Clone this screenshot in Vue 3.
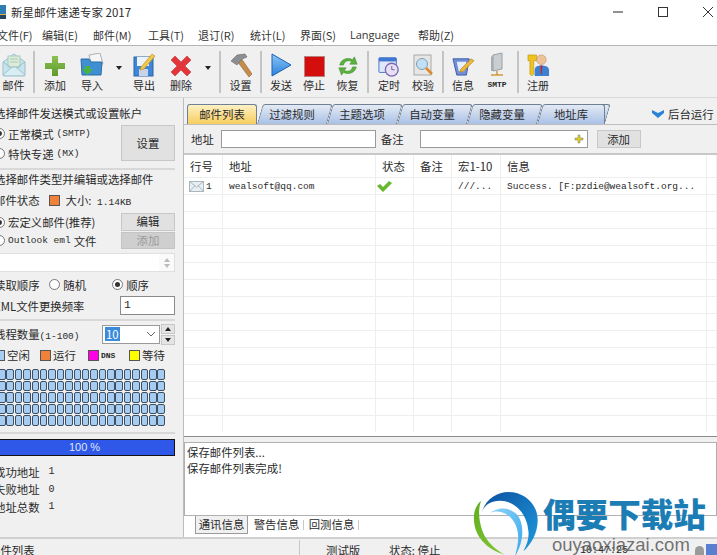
<script setup>
const menus = [
  { label: '文件(F)', width: 45 },
  { label: '编辑(E)', width: 51 },
  { label: '邮件(M)', width: 55 },
  { label: '工具(T)', width: 50 },
  { label: '退订(R)', width: 52 },
  { label: '统计(L)', width: 50 },
  { label: '界面(S)', width: 50 },
  { label: 'Language', width: 68 },
  { label: '帮助(Z)', width: 50 },
]
const tabs = ['邮件列表', '过滤规则', '主题选项', '自动变量', '隐藏变量', '地址库']
const columns = ['行号', '地址', '状态', '备注', '宏1-10', '信息', '']
const emptyRows = 14
const cells = 100
</script>

<template>
  <div class="window">
    <div class="titlebar">
      <svg class="app-icon" width="16" height="16" viewBox="0 0 16 16">
        <rect x="1" y="1" width="14" height="14" fill="#e3b341" />
        <rect x="6" y="1" width="9" height="9" fill="#2f7db5" />
        <rect x="1" y="11" width="14" height="4" fill="#26445f" />
      </svg>
      <span class="title">新星邮件速递专家 2017</span>
      <div class="win-controls">
        <svg width="12" height="12" viewBox="0 0 12 12"><path d="M1 6h10" stroke="#222" /></svg>
        <svg width="12" height="12" viewBox="0 0 12 12"><rect x="1.500" y="1.500" width="9" height="9" fill="none" stroke="#333" /></svg>
        <svg width="12" height="12" viewBox="0 0 12 12"><path d="M1 1l10 10M11 1L1 11" stroke="#333" /></svg>
      </div>
    </div>

    <div class="menubar">
      <span
        v-for="m in menus"
        :key="m.label"
        class="menu"
        :style="{ width: m.width + 'px' }"
      >{{ m.label }}</span>
    </div>

    <div class="toolbar">
      <div class="tool" style="width: 39px">
        <svg width="24" height="25" viewBox="0 0 24 25">
          <path d="M1 10l11-8 11 8v13a1 1 0 0 1-1 1H2a1 1 0 0 1-1-1z" fill="#c8e4ee" stroke="#9dbfca" />
          <rect x="6" y="4" width="12" height="11" fill="#dcecd8" stroke="#a8cbc0" />
          <path d="M8 7h8M8 10h8" stroke="#a9c9b8" />
          <path d="M1 23l9-8h4l9 8M1 10l9 6M23 10l-9 6" fill="#d8eef5" stroke="#9dbfca" />
        </svg>
        <span>邮件</span>
      </div>
      <i class="sep"></i>
      <div class="tool" style="width: 40px">
        <svg width="22" height="22" viewBox="0 0 22 22">
          <defs>
            <linearGradient id="plusFill" x1="0" y1="0" x2="0" y2="1">
              <stop offset="0" stop-color="#8cc152" />
              <stop offset="1" stop-color="#5f9a2c" />
            </linearGradient>
          </defs>
          <path d="M8 1h6v7h7v6h-7v7H8v-7H1V8h7z" fill="url(#plusFill)" />
        </svg>
        <span>添加</span>
      </div>
      <div class="tool" style="width: 34px">
        <svg width="24" height="24" viewBox="0 0 24 24">
          <path d="M9 2l11-2 3 11-11 2z" fill="#f4f6f8" stroke="#a9afb5" />
          <path d="M1 6h8l2 3h11l-1 13H2z" fill="#3f8fd2" stroke="#2a6da8" />
          <path d="M5 13h5v3h3l-5.500 6L2 16h3z" fill="#49b33f" />
        </svg>
        <span>导入</span>
      </div>
      <div class="drop" style="width: 20px"><i></i></div>
      <div class="tool" style="width: 30px">
        <svg width="23" height="24" viewBox="0 0 23 24">
          <rect x="1" y="4" width="19" height="19" fill="#3f86d8" stroke="#2a62a6" />
          <rect x="4" y="4" width="12" height="9" fill="#eef3fa" />
          <rect x="6" y="16" width="9" height="7" fill="#c9d5e6" />
          <path d="M8 14L19 1l3 2-11 13-4 1z" fill="#f2c84b" stroke="#b88a1e" stroke-width=".6" />
        </svg>
        <span>导出</span>
      </div>
      <div class="tool" style="width: 44px">
        <svg width="22" height="22" viewBox="0 0 22 22">
          <path d="M1 5l4-4 6 6 6-6 4 4-6 6 6 6-4 4-6-6-6 6-4-4 6-6z" fill="#e2363a" stroke="#bb3a3e" stroke-width=".6" stroke-linejoin="round" />
        </svg>
        <span>删除</span>
      </div>
      <div class="drop drop--end" style="width: 10px"><i></i></div>
      <i class="sep"></i>
      <div class="tool" style="width: 39px">
        <svg width="22" height="24" viewBox="0 0 22 24">
          <path d="M7 8l4-3 11 16-3 3z" fill="#c58d4d" stroke="#8f6431" stroke-width=".6" />
          <path d="M1 8l6-6 8-1 2 3-5 2-5 6z" fill="#8b8f94" stroke="#666" stroke-width=".6" />
        </svg>
        <span>设置</span>
      </div>
      <i class="sep"></i>
      <div class="tool" style="width: 38px">
        <svg width="21" height="24" viewBox="0 0 21 24">
          <defs>
            <linearGradient id="sendFill" x1="0" y1="0" x2="0" y2="1">
              <stop offset="0" stop-color="#8cc4f4" />
              <stop offset="1" stop-color="#2a82de" />
            </linearGradient>
          </defs>
          <path d="M1 1l19 11L1 23z" fill="url(#sendFill)" stroke="#1d62b0" />
        </svg>
        <span>发送</span>
      </div>
      <div class="tool" style="width: 28px">
        <svg width="21" height="21" viewBox="0 0 21 21">
          <rect x=".5" y=".5" width="20" height="20" fill="#d40d0d" stroke="#b98080" />
        </svg>
        <span>停止</span>
      </div>
      <div class="tool" style="width: 39px">
        <svg width="22" height="22" viewBox="0 0 24 24">
          <path d="M3 11C4 5 11 2 17 5l2-3 3 8-8 0 2-3C12 5 8 7 7 11z" fill="#5cb23f" stroke="#3c8a2a" stroke-width=".6" />
          <path d="M21 13c-1 6-8 9-14 6l-2 3-3-8 8 0-2 3c4 2 8 0 9-4z" fill="#5cb23f" stroke="#3c8a2a" stroke-width=".6" />
        </svg>
        <span>恢复</span>
      </div>
      <i class="sep"></i>
      <div class="tool" style="width: 40px">
        <svg width="22" height="22" viewBox="0 0 24 24">
          <rect x="1" y="3" width="19" height="16" rx="1" fill="#dfe8f8" stroke="#3e6fc4" />
          <rect x="1" y="3" width="19" height="4" fill="#3e78d0" />
          <circle cx="15" cy="16" r="7" fill="#e6e0f2" stroke="#7d68b5" stroke-width="1.500" />
          <path d="M15 12v4h3" fill="none" stroke="#6a5aa0" />
        </svg>
        <span>定时</span>
      </div>
      <div class="tool tool--gap" style="width: 28px">
        <svg width="20" height="23" viewBox="0 0 20 23">
          <rect x="1" y="1" width="17" height="20" fill="#e6e6e6" stroke="#a8a8a8" />
          <circle cx="9" cy="10" r="5.500" fill="#bfe0f6" stroke="#8a9aa8" />
          <path d="M13 14l6 6" stroke="#d88a2a" stroke-width="2.500" />
        </svg>
        <span>校验</span>
      </div>
      <i class="sep"></i>
      <div class="tool" style="width: 38px">
        <svg width="23" height="22" viewBox="0 0 24 23">
          <path d="M1 4h17l-3 17H5z" fill="#6f8fd8" stroke="#3c5ba8" />
          <path d="M5 7h10l-2 10H7z" fill="#e8eefb" />
          <path d="M9 15L20 4l3 2-11 11-4 1z" fill="#eeb93a" stroke="#a87a18" stroke-width=".6" />
        </svg>
        <span>信息</span>
      </div>
      <div class="tool tool--smtp tool--gap" style="width: 30px">
        <svg width="18" height="25" viewBox="0 0 18 25">
          <path d="M5 3l9-2v16l-9 2z" fill="#c9ced2" stroke="#9aa0a5" />
          <path d="M5 3L3 5v14l2 0z" fill="#a6acb1" />
          <path d="M9 19v4M3 23h12" stroke="#d09a3e" stroke-width="1.500" />
        </svg>
        <span>SMTP</span>
      </div>
      <i class="sep"></i>
      <div class="tool" style="width: 38px">
        <svg width="23" height="24" viewBox="0 0 24 25">
          <path d="M1 2h9v6H7v14l-2 2-2-2V8H1z" fill="#f0c21d" stroke="#b58f10" stroke-width=".6" />
          <circle cx="15" cy="7" r="5" fill="#eec39a" stroke="#b98d63" stroke-width=".6" />
          <path d="M8 24v-6c0-4 3-5 7-5s8 1 8 5v6z" fill="#3d7fd0" />
          <path d="M14 13h2l-.5 9h-1z" fill="#cc2020" />
        </svg>
        <span>注册</span>
      </div>
    </div>

    <div class="main">
      <aside class="side">
        <p class="side-text">选择邮件发送模式或设置帐户</p>
        <div class="mode-row">
          <div class="radios">
            <label class="radio"><i class="dot on"></i>正常模式<em>(SMTP)</em></label>
            <label class="radio"><i class="dot"></i>特快专递<em>(MX)</em></label>
          </div>
          <button class="btn btn--big">设置</button>
        </div>
        <hr class="rule rule--a" />
        <p class="side-text">选择邮件类型并编辑或选择邮件</p>
        <div class="state-row">
          <span>邮件状态</span>
          <i class="swatch swatch--state"></i>
          <span>大小: <em class="size-value">1.14KB</em></span>
        </div>
        <div class="type-row">
          <div class="radios radios--type">
            <label class="radio"><i class="dot on"></i>宏定义邮件(推荐)</label>
            <label class="radio"><i class="dot"></i><em>Outlook eml</em>文件</label>
          </div>
          <div class="type-btns">
            <button class="btn">编辑</button>
            <button class="btn btn--off">添加</button>
          </div>
        </div>
        <div class="file-box">
          <div class="file-spin"><i class="up"></i><i class="down"></i></div>
        </div>
        <div class="order-row">
          <span class="order-label">读取顺序</span>
          <label class="radio"><i class="dot"></i>随机</label>
          <label class="radio"><i class="dot on"></i>顺序</label>
        </div>
        <div class="freq-row">
          <span>EML文件更换频率</span>
          <div class="freq-input">1</div>
        </div>
        <hr class="rule rule--b" />
        <div class="thread-row">
          <span>线程数量<em>(1-100)</em></span>
          <div class="combo">
            <span class="combo-value">10</span>
            <svg width="10" height="6" viewBox="0 0 10 6"><path d="M1 1l4 4 4-4" fill="none" stroke="#666" /></svg>
          </div>
          <div class="spin">
            <button><i class="up"></i></button>
            <button><i class="down"></i></button>
          </div>
        </div>
        <div class="legend">
          <span style="width: 46px"><i class="swatch" style="background: #a6ccf2"></i>空闲</span>
          <span style="width: 48px"><i class="swatch" style="background: #f0813a"></i>运行</span>
          <span style="width: 41px"><i class="swatch" style="background: #ff00e6"></i><em>DNS</em></span>
          <span><i class="swatch" style="background: #ffff00"></i>等待</span>
        </div>
        <div class="threads">
          <i v-for="n in cells" :key="n"></i>
        </div>
        <hr class="rule rule--c" />
        <div class="progress">100 %</div>
        <dl class="counts">
          <div><dt>成功地址</dt><dd>1</dd></div>
          <div><dt>失败地址</dt><dd>0</dd></div>
          <div><dt>地址总数</dt><dd>1</dd></div>
        </dl>
      </aside>

      <section class="content">
        <div class="tabs-row">
          <div class="tabs">
            <span
              v-for="(t, i) in tabs"
              :key="t"
              class="tab"
              :class="{ 'tab--active': i === 0 }"
            ><b>{{ t }}</b></span>
          </div>
          <div class="bg-run">
            <svg width="14" height="10" viewBox="0 0 14 10"><path d="M1 1l6 3 6-3v3L7 9 1 4z" fill="#2d83d6" /></svg>
            <span>后台运行</span>
          </div>
        </div>

        <div class="filter">
          <span>地址</span>
          <div class="field field--addr"></div>
          <span>备注</span>
          <div class="field field--note">
            <svg width="10" height="10" viewBox="0 0 10 10"><path d="M4 1h2v3h3v2H6v3H4V6H1V4h3z" fill="#e6d21a" stroke="#776" stroke-width=".5" /></svg>
          </div>
          <button class="btn btn--add">添加</button>
        </div>

        <div class="table">
          <div class="tr tr--head">
            <div v-for="(c, i) in columns" :key="i" class="td">{{ c }}</div>
          </div>
          <div class="tr tr--row">
            <div class="td td--num">
              <svg width="15" height="11" viewBox="0 0 15 11">
                <rect x=".5" y=".5" width="14" height="10" fill="#e8eef2" stroke="#a8b6bf" />
                <path d="M1 1l6.500 5L14 1M1 10l4.500-5M14 10L9.500 5" fill="none" stroke="#a8b6bf" />
              </svg>
              <em>1</em>
            </div>
            <div class="td td--mono">wealsoft@qq.com</div>
            <div class="td td--check">
              <svg width="15" height="11" viewBox="0 0 15 11"><path d="M0 5l3-2 3 3 6-6 3 2-9 9z" fill="#66b82e" /></svg>
            </div>
            <div class="td"></div>
            <div class="td td--mono">///...</div>
            <div class="td td--mono">Success. [F:pzdie@wealsoft.org...</div>
            <div class="td"></div>
          </div>
          <div v-for="n in emptyRows" :key="n" class="tr tr--row">
            <div v-for="c in 7" :key="c" class="td"></div>
          </div>
        </div>

        <div class="log">
          <p>保存邮件列表...</p>
          <p>保存邮件列表完成!</p>
        </div>
        <div class="log-tabs">
          <span class="log-tab log-tab--active">通讯信息</span>
          <span class="log-tab">警告信息</span>
          <span class="log-tab">回测信息</span>
        </div>
      </section>
    </div>

    <div class="statusbar">
      <span class="st st--a">邮件列表</span>
      <span class="st st--b">测试版</span>
      <span class="st st--c">状态: 停止</span>
      <span class="st st--d">10:47:25</span>
    </div>

    <div class="watermark">
      <svg width="80" height="67" viewBox="0 0 240 201">
        <defs>
          <linearGradient id="ringBlue" x1="0" y1="0" x2="1" y2="1">
            <stop offset="0" stop-color="#0d4f9e" />
            <stop offset="1" stop-color="#1e9be0" />
          </linearGradient>
          <linearGradient id="swooshBlue" x1="0" y1="0" x2="1" y2="1">
            <stop offset="0" stop-color="#8fd4fa" />
            <stop offset="1" stop-color="#38a8ec" />
          </linearGradient>
          <linearGradient id="leafGreen" x1="0" y1="0" x2="1" y2="1">
            <stop offset="0" stop-color="#5fae1e" />
            <stop offset="1" stop-color="#86c83a" />
          </linearGradient>
        </defs>
        <path d="M50 75C60 35 95 12 130 12c50 0 88 38 88 84 0 38-18 72-43 94 12-22 18-42 15-62-4-50-40-90-85-90-30 0-48 14-55 37z" fill="url(#ringBlue)" />
        <path d="M75 75c25-20 60-18 82 6 20 24 22 78-7 124 8-32 16-62 2-94-14-30-45-50-77-36z" fill="url(#swooshBlue)" />
        <path d="M48 38C28 55 22 85 30 118c10 40 48 72 90 82-30-16-56-40-68-72-10-30-14-60-4-90z" fill="url(#leafGreen)" />
      </svg>
      <div class="wm-text">
        <strong>偶要下载站</strong>
        <span>ouyaoxiazai.com</span>
      </div>
    </div>
    <div class="tray">
      <i></i><b></b>
    </div>
  </div>
</template>

<style scoped>
.window {
  position: relative;
  display: flex;
  flex-direction: column;
  width: 723px;
  height: 555px;
  margin-left: -6px;
  overflow: hidden;
  background: #f0f0f0;
  color: #2a2a2a;
  font-family: "Noto Sans CJK SC", "Liberation Sans", sans-serif;
  font-size: 11.400px;
}

em {
  font-family: "Liberation Mono", monospace;
  font-size: 9.500px;
  font-style: normal;
}

p {
  margin: 0;
}

.titlebar {
  display: flex;
  align-items: center;
  flex: none;
  height: 24px;
  background: #fff;
}

.app-icon {
  margin-left: -3px;
}

.title {
  margin-left: 4px;
  font-size: 11.500px;
}

.win-controls {
  display: flex;
  gap: 33px;
  margin-left: auto;
  padding-right: 3px;
}

.menubar {
  display: flex;
  align-items: center;
  flex: none;
  height: 22px;
  padding-left: 3px;
  border-bottom: 1px solid #b4b4b4;
  background: #fff;
  box-sizing: border-box;
  color: #333;
  font-size: 11px;
}

.menu {
  flex: none;
  white-space: nowrap;
}

.menu:nth-child(8) {
  font-family: "Open Sans", sans-serif;
}

.toolbar {
  display: flex;
  align-items: stretch;
  flex: none;
  height: 52px;
  padding: 3px 0 4px;
  border-bottom: 1px solid #d8d8d8;
  box-sizing: border-box;
}

.tool {
  display: flex;
  flex-direction: column;
  align-items: center;
  justify-content: flex-end;
  flex: none;
  font-size: 11px;
  line-height: 16px;
}

.tool svg {
  flex: none;
}

.tool--gap {
  margin-right: 5px;
}

.tool--smtp span {
  font-family: "Liberation Mono", monospace;
  font-size: 8px;
  font-weight: 700;
}

.sep {
  flex: none;
  width: 2px;
  margin: 2px 0 0;
  background: #c4c4c4;
}

.drop {
  display: flex;
  align-items: center;
  justify-content: center;
  flex: none;
  padding-bottom: 6px;
}

.drop--end {
  margin-right: 6px;
}

.drop i,
.up,
.down {
  display: block;
  width: 0;
  height: 0;
  border-left: 3.500px solid transparent;
  border-right: 3.500px solid transparent;
}

.drop i,
.down {
  border-top: 4px solid #222;
}

.up {
  border-bottom: 4px solid #222;
}

.main {
  display: flex;
  flex: 1;
  min-height: 0;
  border-bottom: 2px solid #d0d0d0;
}

.side {
  display: flex;
  flex-direction: column;
  flex: none;
  width: 190px;
  padding: 7px 8px 0 0;
  border-right: 1px solid #bdbdbd;
  box-sizing: border-box;
}

.side-text {
  flex: none;
  height: 17px;
  line-height: 17px;
  white-space: nowrap;
}

.mode-row {
  display: flex;
  justify-content: space-between;
  flex: none;
  height: 40px;
  margin-top: 2px;
}

.radios {
  display: flex;
  flex-direction: column;
  gap: 3px;
  padding-top: 1px;
}

.radio {
  display: flex;
  align-items: center;
  gap: 3px;
  height: 17px;
  white-space: nowrap;
}

.dot {
  position: relative;
  flex: none;
  width: 11px;
  height: 11px;
  border: 1px solid #777;
  border-radius: 50%;
  background: #fff;
  box-sizing: border-box;
}

.dot.on::after {
  content: "";
  position: absolute;
  inset: 2px;
  border-radius: 50%;
  background: #333;
}

.btn {
  display: block;
  padding: 0;
  border: 1px solid #c8c8c8;
  background: #e1e1e1;
  color: #2a2a2a;
  font: inherit;
}

.btn--big {
  width: 54px;
  height: 36px;
  margin-top: 1px;
}

.btn--off {
  border-color: #c4c4c4;
  background: #cfcfcf;
  color: #9a9a9a;
}

.rule {
  flex: none;
  width: 100%;
  height: 0;
  margin: 0;
  border: 0;
  border-top: 2px solid #d8d8d8;
}

.rule--a {
  margin: 4px 0 1px;
}

.rule--b {
  margin: 4px 0 3px;
}

.rule--c {
  margin: 4px 0 5px;
}

.state-row {
  display: flex;
  align-items: center;
  flex: none;
  height: 20px;
  margin-top: 2px;
  white-space: nowrap;
}

.size-value {
  margin-left: 3px;
}

.swatch {
  display: inline-block;
  flex: none;
  width: 11px;
  height: 11px;
  border: 1px solid #555;
  box-sizing: border-box;
}

.swatch--state {
  margin: 0 6px 0 9px;
  background: #f0813a;
}

.type-row {
  display: flex;
  justify-content: space-between;
  flex: none;
  height: 36px;
  margin-top: 3px;
}

.radios--type {
  gap: 2px;
}

.type-btns {
  display: flex;
  flex-direction: column;
  gap: 1px;
}

.type-btns .btn {
  width: 54px;
  height: 18px;
  line-height: 15px;
}

.file-box {
  display: flex;
  justify-content: flex-end;
  flex: none;
  height: 19px;
  margin-top: 4px;
  border: 1px solid #e0e0e0;
  background: #fff;
  box-sizing: border-box;
}

.file-spin {
  display: flex;
  flex-direction: column;
  align-items: center;
  justify-content: center;
  gap: 2px;
  width: 15px;
  background: #f0f0f0;
  opacity: 0.3;
}

.order-row {
  display: flex;
  align-items: center;
  flex: none;
  height: 17px;
  margin-top: 4px;
  white-space: nowrap;
}

.order-label {
  width: 59px;
}

.order-row .radio {
  width: 67px;
}

.freq-row {
  display: flex;
  align-items: center;
  justify-content: space-between;
  flex: none;
  height: 19px;
  margin-top: 3px;
  white-space: nowrap;
}

.freq-input {
  width: 55px;
  height: 19px;
  padding-left: 3px;
  border: 1px solid #8a8a8a;
  background: #fff;
  box-sizing: border-box;
  font-family: "Liberation Mono", monospace;
  line-height: 16px;
}

.thread-row {
  display: flex;
  align-items: center;
  flex: none;
  height: 20px;
  white-space: nowrap;
}

.thread-row > span {
  width: 108px;
}

.combo {
  display: flex;
  align-items: center;
  justify-content: space-between;
  width: 58px;
  height: 19px;
  padding: 0 3px 0 2px;
  border: 1px solid #9a9a9a;
  background: #fff;
  box-sizing: border-box;
}

.combo-value {
  padding: 0 1px;
  background: #3b8bdc;
  color: #fff;
  line-height: 14px;
}

.spin {
  display: flex;
  flex-direction: column;
  gap: 1px;
  margin-left: 1px;
}

.spin button {
  display: flex;
  align-items: center;
  justify-content: center;
  width: 14px;
  height: 10px;
  padding: 0;
  border: 1px solid #c8c8c8;
  background: #e4e4e4;
}

.legend {
  display: flex;
  align-items: center;
  flex: none;
  height: 18px;
  margin-top: 2px;
  white-space: nowrap;
}

.legend span {
  display: inline-flex;
  align-items: center;
  gap: 2px;
}

.legend em {
  font-size: 8px;
  font-weight: 700;
}

.threads {
  display: grid;
  grid-template-columns: repeat(20, 8.400px);
  grid-auto-rows: 11.500px;
  flex: none;
  height: 59px;
  margin: 5px 0 0 4px;
}

.threads i {
  width: 7.500px;
  height: 10.500px;
  border: 1px solid #3d4f63;
  border-radius: 2px;
  background: #a6ccf2;
  box-sizing: border-box;
}

.progress {
  flex: none;
  height: 17px;
  border: 1px solid #111;
  background: #3058e8;
  box-sizing: border-box;
  color: #dfe6ff;
  font-family: "Liberation Sans", sans-serif;
  font-size: 11px;
  line-height: 15px;
  text-align: center;
}

.counts {
  margin: 7px 0 0;
}

.counts div {
  display: flex;
  align-items: center;
  gap: 9px;
  height: 17.500px;
}

.counts dd {
  margin: 0;
  font-family: "Liberation Mono", monospace;
  font-size: 10px;
}

.content {
  display: flex;
  flex-direction: column;
  flex: 1;
  min-width: 0;
}

.tabs-row {
  display: flex;
  align-items: flex-end;
  flex: none;
  height: 27px;
  padding-left: 3px;
  border-bottom: 1px solid #bdbdbd;
  box-sizing: border-box;
}

.tabs {
  display: flex;
}

.tab {
  position: relative;
  display: block;
  width: 70px;
  height: 20px;
  text-align: center;
}

.tab::before {
  content: "";
  position: absolute;
  inset: 0;
  border: 1px solid #6f7f94;
  border-bottom: 0;
  border-radius: 3px 3px 0 0;
  background: linear-gradient(#e4eaf4, #a9c1e6);
  transform: skewX(-16deg);
  transform-origin: bottom;
}

.tab:last-child {
  width: 68px;
}

.tab:last-child::after {
  content: "";
  position: absolute;
  inset: 0 0 0 50%;
  border: 1px solid #6f7f94;
  border-bottom: 0;
  border-left: 0;
  border-radius: 0 3px 0 0;
  background: linear-gradient(#e4eaf4, #a9c1e6);
}

.tab--active {
  z-index: 1;
}

.tab--active::before {
  background: linear-gradient(#fdf1c4, #f7cd5c);
  transform: none;
}

.tab b {
  position: relative;
  z-index: 1;
  font-weight: 400;
  line-height: 20px;
}

.bg-run {
  display: flex;
  align-items: center;
  gap: 3px;
  height: 20px;
  margin-left: 46px;
  white-space: nowrap;
}

.filter {
  display: flex;
  align-items: center;
  flex: none;
  height: 30px;
  padding-left: 7px;
  border-bottom: 2px solid #c8c8c8;
  box-sizing: border-box;
  white-space: nowrap;
}

.field {
  display: flex;
  align-items: center;
  justify-content: flex-end;
  height: 18px;
  padding-right: 3px;
  border: 1px solid #9a9a9a;
  background: #fff;
  box-sizing: border-box;
}

.field--addr {
  width: 155px;
  margin: 0 5px 0 7px;
}

.field--note {
  width: 168px;
  margin: 0 9px 0 16px;
}

.btn--add {
  width: 44px;
  height: 18px;
  line-height: 15px;
}

.table {
  flex: none;
  height: 282px;
  overflow: hidden;
  border-bottom: 1px solid #8c8c8c;
  background: #fff;
  box-sizing: border-box;
}

.tr {
  display: grid;
  grid-template-columns: 39px 153px 38px 38px 49px 206px 1fr;
}

.tr--head {
  height: 22px;
}

.tr--row {
  height: 17px;
  border-top: 1px solid #eeeeee;
  box-sizing: border-box;
}

.td {
  display: flex;
  align-items: center;
  min-width: 0;
  padding-left: 6px;
  border-right: 1px solid #eeeeee;
  overflow: hidden;
  white-space: nowrap;
}

.td--num {
  gap: 2px;
  padding-left: 5px;
}

.td--check {
  padding-left: 1px;
}

.td--mono {
  font-family: "Liberation Mono", monospace;
  font-size: 9.500px;
}

.log {
  flex: none;
  height: 74px;
  margin-top: 5px;
  padding: 2px;
  border: 1px solid #b0b0b0;
  background: #fff;
  box-sizing: border-box;
  line-height: 15.500px;
}

.log-tabs {
  display: flex;
  flex: 1;
  padding-left: 11px;
  background: #fff;
}

.log-tab {
  position: relative;
  width: 55px;
  height: 18px;
  line-height: 17px;
  text-align: center;
  box-sizing: border-box;
}

.log-tab::after {
  content: "";
  position: absolute;
  top: 4px;
  right: 0;
  width: 1px;
  height: 10px;
  background: #c8c8c8;
}

.log-tab--active {
  width: 53px;
  margin-right: 1px;
  border: 1px solid #9a9a9a;
  border-top: 0;
  background: #f0f0f0;
}

.log-tab--active::after {
  display: none;
}

.statusbar {
  display: flex;
  align-items: center;
  flex: none;
  height: 16px;
  padding-top: 6px;
  box-sizing: border-box;
  white-space: nowrap;
}

.st {
  flex: none;
  box-sizing: border-box;
}

.st--a {
  width: 310px;
  margin-left: -5px;
}

.st--b {
  width: 70px;
  padding-left: 27px;
}

.st--c {
  width: 211px;
  padding-left: 20px;
}

.st--d {
  font-family: "Liberation Mono", monospace;
  font-size: 10px;
}

.statusbar::before {
  content: "";
  position: absolute;
  left: 305px;
  bottom: 0;
  width: 1px;
  height: 15px;
  background: #c8c8c8;
}

.watermark {
  position: absolute;
  top: 488px;
  left: 471px;
  display: flex;
  pointer-events: none;
}

.wm-text {
  display: flex;
  flex-direction: column;
  align-items: flex-start;
  margin: 7px 0 0 -2px;
}

.wm-text strong {
  color: #1c7db5;
  font-size: 32.600px;
  font-weight: 900;
  line-height: 36px;
  white-space: nowrap;
}

.wm-text span {
  margin: 4px 0 0 9px;
  color: rgba(90, 90, 90, 0.85);
  font-family: "Liberation Sans", sans-serif;
  font-size: 18.500px;
  line-height: 20px;
  white-space: nowrap;
}

.tray {
  position: absolute;
  right: 0;
  bottom: 0;
  display: flex;
  align-items: flex-end;
  gap: 2px;
}

.tray i {
  width: 9px;
  height: 9px;
  border-radius: 50% 50% 0 0;
  background: #9a9a9a;
}

.tray b {
  width: 11px;
  height: 11px;
  background: #5a7fd0;
}
</style>

<style>
html,
body {
  overflow: hidden;
}
</style>
